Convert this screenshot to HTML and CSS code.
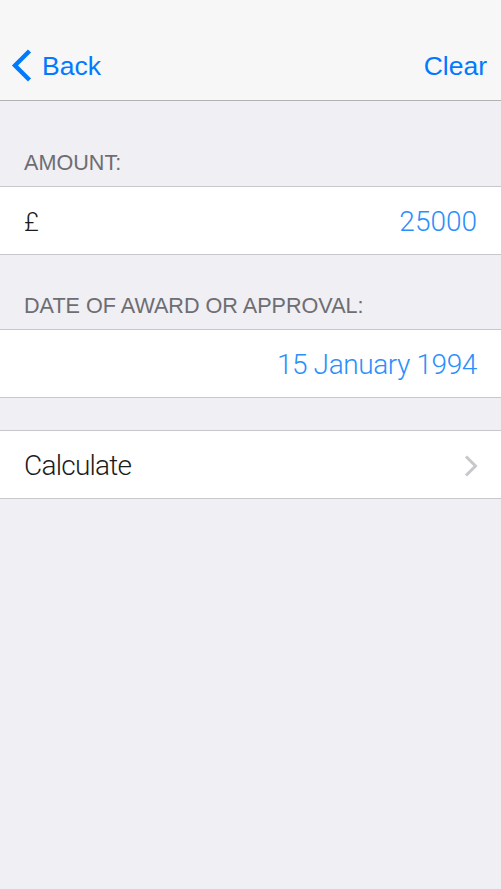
FILE: index.html
```html
<!DOCTYPE html>
<html>
<head>
<meta charset="utf-8">
<link rel="stylesheet" href="styles.css">
</head>
<body>
<div class="nav">
  <div class="nav-back">
    <svg class="back-chev" width="24" height="36" viewBox="0 0 24 36"><polyline points="18.5,3 4,17.5 18.5,32" fill="none" stroke="#007aff" stroke-width="4.4"/></svg>
    <span>Back</span>
  </div>
  <div class="nav-clear">Clear</div>
</div>
<div class="content">
  <div class="header first">AMOUNT:</div>
  <div class="cell">
    <span class="label pound">£</span>
    <span class="value">25000</span>
  </div>
  <div class="header">DATE OF AWARD OR APPROVAL:</div>
  <div class="cell">
    <span class="label"></span>
    <span class="value date">15 January 1994</span>
  </div>
  <div class="spacer"></div>
  <div class="cell">
    <span class="label calc">Calculate</span>
    <svg class="chev" width="14" height="22" viewBox="0 0 14 22"><polyline points="2,1.5 11.5,11 2,20.5" fill="none" stroke="#c7c7cc" stroke-width="3"/></svg>
  </div>
</div>
</body>
</html>
```
FILE: styles.css
```css
html, body {
  margin: 0;
  padding: 0;
}
body {
  width: 501px;
  height: 889px;
  background: #efeff4;
  font-family: "Liberation Sans", Arial, sans-serif;
  overflow: hidden;
}
.nav {
  height: 101px;
  box-sizing: border-box;
  background: #f7f7f8;
  border-bottom: 1px solid #b2b2b2;
  display: flex;
  align-items: center;
  justify-content: space-between;
  padding: 32px 14px 0 11px;
  color: #007aff;
  font-size: 26.5px;
}
.nav-back {
  display: flex;
  align-items: center;
  gap: 7px;
}
.back-chev {
  display: block;
}
.content {
  display: flex;
  flex-direction: column;
}
.header {
  padding: 39px 24px 11px;
  line-height: 24px;
  font-size: 21.6px;
  color: #6d6d72;
}
.header.first {
  padding-top: 50px;
}
.cell {
  background: #fff;
  border-top: 1px solid #c8c7cc;
  border-bottom: 1px solid #c8c7cc;
  height: 67px;
  display: flex;
  align-items: center;
  justify-content: space-between;
  padding: 0 24px;
  font-family: Roboto, "Liberation Sans", sans-serif;
  font-weight: 300;
  font-size: 28px;
}
.cell > * {
  margin-top: 2px;
}
.label {
  color: #1c1c1c;
}
.calc {
  letter-spacing: -0.75px;
}
.pound {
  font-size: 26px;
}
.value {
  color: #2b8ffa;
}
.date {
  letter-spacing: -0.4px;
}
.spacer {
  height: 32px;
}
.chev {
  display: block;
  margin-right: -1px;
}
```
